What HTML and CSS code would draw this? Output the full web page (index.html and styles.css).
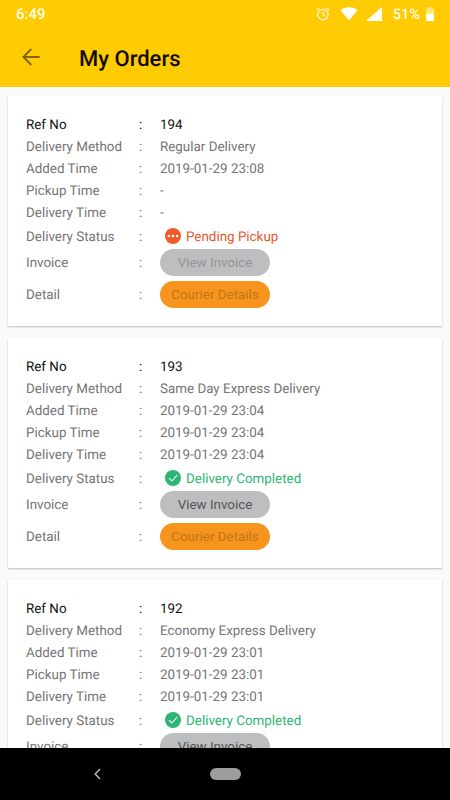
FILE: index.html
```
<!DOCTYPE html>
<html lang="en">
<head>
    <meta charset="UTF-8">
    <meta name="viewport" content="width=device-width, initial-scale=1.0">
    <title>My Orders</title>
    <link rel="stylesheet" href="styles.css">
</head>
<body>

    <header>
        <div class="status-bar">
            <span class="clock">6:49</span>
            <svg class="alarm" width="14" height="14" viewBox="0 0 14 14" fill="none" stroke="#fff6cf" stroke-width="1.3">
                <circle cx="7" cy="7.6" r="5.2"/>
                <path d="M7 4.4v3.5l2.3 1.4M.7 3.1L3.4.8M13.3 3.1L10.6.8"/>
            </svg>
            <svg class="wifi" width="18" height="14" viewBox="0 0 18 14" fill="#fff">
                <path d="M9 13.4L.4 2.9C5.3-.7 12.7-.7 17.6 2.9z"/>
            </svg>
            <svg class="signal" width="16" height="14" viewBox="0 0 16 14" fill="#fff">
                <path d="M16 0v14H0z"/>
            </svg>
            <span class="percent">51%</span>
            <svg class="battery" width="8" height="14" viewBox="0 0 8 14">
                <path d="M2.4 0h3.2v1.5H8V7H0V1.5h2.4z" fill="#ffe680"/>
                <path d="M0 7h8v7H0z" fill="#fff"/>
            </svg>
        </div>
        <div class="title-bar">
            <svg class="back" width="18" height="18" viewBox="0 0 18 18" fill="none" stroke="#806600" stroke-width="1.9">
                <path d="M17.7 9H1.6M9.3 1L1.4 9l7.9 8"/>
            </svg>
            <h1>My Orders</h1>
        </div>
    </header>

    <main>
        <div class="card">
            <div class="row ref"><span>Ref No</span><span>:</span><span>194</span></div>
            <div class="row"><span>Delivery Method</span><span>:</span><span>Regular Delivery</span></div>
            <div class="row"><span>Added Time</span><span>:</span><span>2019-01-29 23:08</span></div>
            <div class="row"><span>Pickup Time</span><span>:</span><span>-</span></div>
            <div class="row"><span>Delivery Time</span><span>:</span><span>-</span></div>
            <div class="row status-row">
                <span>Delivery Status</span><span>:</span>
                <span class="status pending">
                    <svg width="16" height="16" viewBox="0 0 16 16">
                        <circle cx="8" cy="8" r="8" fill="#f15a29"/>
                        <g fill="#fff"><circle cx="3.9" cy="8" r="1.3"/><circle cx="8" cy="8" r="1.3"/><circle cx="12.1" cy="8" r="1.3"/></g>
                    </svg>
                    Pending Pickup
                </span>
            </div>
            <div class="row button-row"><span>Invoice</span><span>:</span><button class="invoice" disabled>View Invoice</button></div>
            <div class="row button-row"><span>Detail</span><span>:</span><button class="courier" disabled>Courier Details</button></div>
        </div>

        <div class="card">
            <div class="row ref"><span>Ref No</span><span>:</span><span>193</span></div>
            <div class="row"><span>Delivery Method</span><span>:</span><span>Same Day Express Delivery</span></div>
            <div class="row"><span>Added Time</span><span>:</span><span>2019-01-29 23:04</span></div>
            <div class="row"><span>Pickup Time</span><span>:</span><span>2019-01-29 23:04</span></div>
            <div class="row"><span>Delivery Time</span><span>:</span><span>2019-01-29 23:04</span></div>
            <div class="row status-row">
                <span>Delivery Status</span><span>:</span>
                <span class="status completed">
                    <svg width="16" height="16" viewBox="0 0 16 16">
                        <circle cx="8" cy="8" r="8" fill="#2bb673"/>
                        <path d="M4 8.2l2.9 2.8L12.2 5" fill="none" stroke="#fff" stroke-width="1.1"/>
                    </svg>
                    Delivery Completed
                </span>
            </div>
            <div class="row button-row"><span>Invoice</span><span>:</span><button class="invoice">View Invoice</button></div>
            <div class="row button-row"><span>Detail</span><span>:</span><button class="courier" disabled>Courier Details</button></div>
        </div>

        <div class="card">
            <div class="row ref"><span>Ref No</span><span>:</span><span>192</span></div>
            <div class="row"><span>Delivery Method</span><span>:</span><span>Economy Express Delivery</span></div>
            <div class="row"><span>Added Time</span><span>:</span><span>2019-01-29 23:01</span></div>
            <div class="row"><span>Pickup Time</span><span>:</span><span>2019-01-29 23:01</span></div>
            <div class="row"><span>Delivery Time</span><span>:</span><span>2019-01-29 23:01</span></div>
            <div class="row status-row">
                <span>Delivery Status</span><span>:</span>
                <span class="status completed">
                    <svg width="16" height="16" viewBox="0 0 16 16">
                        <circle cx="8" cy="8" r="8" fill="#2bb673"/>
                        <path d="M4 8.2l2.9 2.8L12.2 5" fill="none" stroke="#fff" stroke-width="1.1"/>
                    </svg>
                    Delivery Completed
                </span>
            </div>
            <div class="row button-row"><span>Invoice</span><span>:</span><button class="invoice">View Invoice</button></div>
        </div>
    </main>

    <nav>
        <svg class="nav-back" width="7" height="12" viewBox="0 0 7 12" fill="none" stroke="#b5b5b5" stroke-width="1.5">
            <path d="M6 1L1.2 6 6 11"/>
        </svg>
        <div class="home"></div>
    </nav>

</body>
</html>
```
FILE: styles.css
```
* {
    box-sizing: border-box;
}
body {
    display: flex;
    flex-direction: column;
    height: 800px;
    margin: 0;
    overflow: hidden;
    background-color: #fafafa;
    font-family: Roboto, sans-serif;
    font-size: 13.4px;
    line-height: 18px;
    text-rendering: geometricPrecision;
    color: #757575;
}
header {
    flex: none;
    height: 87px;
    background-color: #ffcb03;
}

.status-bar {
    display: flex;
    align-items: center;
    height: 27px;
    padding: 0 16px 0 16px;
    color: #fffbe6;
    font-weight: 500;
}

.clock {
    margin-right: auto;
    font-size: 15px;
}

.percent {
    margin: 2px 6px 0 11px;
    font-size: 14.5px;
}

.wifi {
    margin: 0 8px 0 10px;
}

.title-bar {
    display: flex;
    align-items: center;
    height: 60px;
    padding-left: 22px;
}

h1 {
    margin: 5px 0 0 39px;
    font-size: 22px;
    line-height: 28px;
    font-weight: 500;
    color: #120e00;
}

main {
    flex: 1;
    min-height: 0;
    overflow: hidden;
    padding: 9px 8px 0;
}

.card {
    height: 230px;
    margin-bottom: 12px;
    padding: 17px 18px;
    background-color: #fff;
    border-radius: 1px;
    box-shadow: 0 1px 2px rgba(0,0,0,0.25);
}

.row {
    display: grid;
    grid-template-columns: 113px 21px 1fr;
    align-items: center;
    height: 22px;
}

/* nudge the text down to line up with the icons and buttons */
.row > span {
    padding-top: 3px;
}

.ref {
    color: #111;
}

.status-row {
    height: 26px;
}

.button-row {
    height: 27px;
    margin-bottom: 5px;
}

.status {
    display: flex;
    align-items: center;
    gap: 5px;
    padding-left: 5px;
}

.status svg {
    margin-top: -4px;
}

.pending {
    color: #e4572e;
}

.completed {
    color: #2bb673;
}

button {
    width: 110px;
    height: 27px;
    padding: 0;
    border: none;
    border-radius: 14px;
    font: inherit;
}

.invoice {
    background-color: #bcbec0;
    color: #555;
}

.invoice:disabled {
    color: #939597;
}

.courier:disabled {
    background-color: #f7941e;
    color: #c17517;
}

nav {
    display: flex;
    align-items: center;
    flex: none;
    height: 52px;
    padding-left: 94px;
    background-color: #000;
}

.home {
    width: 31px;
    height: 12px;
    margin-left: 109px;
    border-radius: 6px;
    background-color: #9e9e9e;
}
```
